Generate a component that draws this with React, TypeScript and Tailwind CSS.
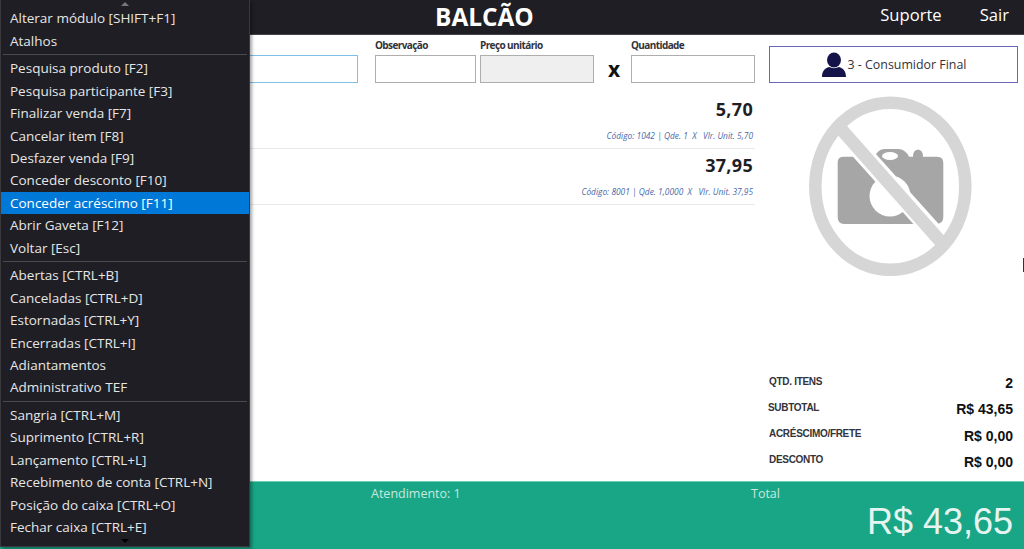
const groups = [
  ["Alterar módulo [SHIFT+F1]", "Atalhos"],
  ["Pesquisa produto [F2]", "Pesquisa participante [F3]", "Finalizar venda [F7]", "Cancelar item [F8]", "Desfazer venda [F9]", "Conceder desconto [F10]", "Conceder acréscimo [F11]", "Abrir Gaveta [F12]", "Voltar [Esc]"],
  ["Abertas [CTRL+B]", "Canceladas [CTRL+D]", "Estornadas [CTRL+Y]", "Encerradas [CTRL+I]", "Adiantamentos", "Administrativo TEF"],
  ["Sangria [CTRL+M]", "Suprimento [CTRL+R]", "Lançamento [CTRL+L]", "Recebimento de conta [CTRL+N]", "Posição do caixa [CTRL+O]", "Fechar caixa [CTRL+E]"],
];

function Menu() {
  return (
    <div className="absolute left-0 top-0 w-[250px] h-[547px] bg-[#1e1e24] border border-[#3a3a3e] border-t-0 shadow-[2px_2px_3px_rgba(0,0,0,0.35)] pt-[7.3px] text-[13.5px] text-[#e6e6e6] font-['Open_Sans',sans-serif]">
      <div className="absolute left-[120px] top-[2px] w-0 h-0 border-x-[4px] border-x-transparent border-b-[4px] border-b-[#77777a]" />
      {groups.map((g, i) => (
        <div key={i}>
          {i > 0 && <div className="mx-[2px] my-[2px] h-px bg-[#4a4a4e]" />}
          {g.map((t) => (
            <div
              key={t}
              className={`h-[22.45px] pl-[9px] flex items-center whitespace-nowrap ${t.startsWith("Conceder acr") ? "bg-[#0078d7] text-white" : ""}`}
            >
              {t}
            </div>
          ))}
        </div>
      ))}
      <div className="absolute left-[120px] top-[539px] w-0 h-0 border-x-[4px] border-x-transparent border-t-[4px] border-t-black" />
    </div>
  );
}

function Field({ label, className, bg }: { label?: string; className: string; bg?: string }) {
  return (
    <div className={`flex flex-col ${className}`}>
      <div className="h-[20px] text-[10px] tracking-[-0.6px] font-bold text-[#33333a] leading-[20px] whitespace-nowrap">{label}</div>
      <div className={`h-[28px] border border-[#aeaeae] ${bg ?? "bg-white"}`} />
    </div>
  );
}

function Item({ value, info }: { value: string; info: string }) {
  return (
    <div className="h-[56px] border-b border-[#e8e8ea] flex flex-col items-end pr-[2px]">
      <div className="text-[18px] font-bold text-[#1e1e24] leading-[25px] mt-[4px] tracking-[0.3px]">{value}</div>
      <div className="mt-[8px] text-[8.4px] italic text-[#4a6aa8] leading-[12px] whitespace-pre">{info}</div>
    </div>
  );
}

function Total({ label, value, labelClass, valueClass }: { label: string; value: string; labelClass?: string; valueClass?: string }) {
  return (
    <div className="h-[26px] flex justify-between items-start">
      <span className={`mt-[2px] text-[10px] tracking-[-0.3px] font-bold text-[#33333a] leading-[14px] ${labelClass ?? ""}`}>{label}</span>
      <span className={`text-[14px] font-bold text-[#111] leading-[18px] ${valueClass ?? "mt-[2px]"}`}>{value}</span>
    </div>
  );
}

export default function App() {
  return (
    <div className="relative w-[1024px] h-[549px] overflow-hidden bg-white font-['Open_Sans',sans-serif] flex flex-col">
      <header className="h-[35px] shrink-0 bg-[#1e1e24] border-b border-[#44444a] flex items-center text-white">
        <div className="ml-[435px] -mt-[1px] text-[24.4px] font-bold leading-[34px] whitespace-nowrap">BALCÃO</div>
        <div className="ml-auto mr-[15px] -mt-[4px] flex gap-[38px] text-[16.6px]">
          <span>Suporte</span>
          <span>Sair</span>
        </div>
      </header>
      <main className="flex-1 flex min-h-0">
        <div className="w-[755px] shrink-0">
          <div className="flex items-end">
            <div className="ml-[240px] w-[118px] h-[28px] border border-[#7fbfe8]" />
            <Field label="Observação" className="ml-[17px] w-[101px]" />
            <Field label="Preço unitário" className="ml-[4px] w-[114px]" bg="bg-[#efefef]" />
            <div className="w-[37px] h-[28px] pl-[3px] flex items-center justify-center text-[21px] font-bold text-[#111] leading-none">x</div>
            <Field label="Quantidade" className="w-[124px]" />
          </div>
          <div className="ml-[240px] mt-[10px]">
            <Item value="5,70" info="Código: 1042 | Qde. 1  X   Vlr. Unit. 5,70" />
            <Item value="37,95" info="Código: 8001 | Qde. 1,0000  X   Vlr. Unit. 37,95" />
          </div>
        </div>
        <div className="ml-[14px] w-[249px] flex flex-col">
          <div className="mt-[11px] h-[37px] border border-[#6a66b8] flex items-center justify-center gap-[1px] text-[12.4px] text-[#33333a]">
            <svg width="26" height="26" viewBox="0 0 26 26" fill="#14144a">
              <ellipse cx="13" cy="8" rx="7" ry="7.5" />
              <path d="M1 25c0-6 3-9 7-10 3 1.500 7 1.500 10 0 4 1 7 4 7 10z" />
            </svg>
            <span className="pt-[1px]">3 - Consumidor Final</span>
          </div>
          <svg className="ml-[40px] mt-[13px]" width="164" height="181" viewBox="0 0 164 181">
            <path d="M28.700 66 Q28.700 60.700 35 60.700 L66 60.700 Q68 54 75 53 L90 53 Q97 54 100 60.700 L104 60.700 Q104 54 109 53.500 Q114 54 114 60.700 L128 60.700 Q134.300 60.700 134.300 67 L134.300 121 Q134.300 128 127 128 L35 128 Q28.700 128 28.700 121 Z" fill="#a6a6a6" />
            <ellipse cx="81" cy="60" rx="8" ry="4" fill="#fff" />
            <circle cx="81" cy="100" r="20.500" fill="#fff" />
            <line x1="30" y1="31" x2="135" y2="148" stroke="#fff" strokeWidth="19" />
            <ellipse cx="81.300" cy="90.300" rx="75" ry="83.500" fill="none" stroke="#d6d6d6" strokeWidth="12.500" />
            <line x1="32" y1="33" x2="132" y2="146" stroke="#d6d6d6" strokeWidth="13" />
          </svg>
          <div className="mt-auto pb-[4px] pr-[5px] font-['Liberation_Sans',sans-serif]">
            <Total label="QTD. ITENS" value="2" valueClass="mt-[1px]" />
            <Total label="SUBTOTAL" value="R$ 43,65" labelClass="-ml-[1px]" valueClass="mt-[1px]" />
            <Total label="ACRÉSCIMO/FRETE" value="R$ 0,00" />
            <Total label="DESCONTO" value="R$ 0,00" />
          </div>
        </div>
      </main>
      <footer className="h-[68px] shrink-0 bg-[#19a686] border-t border-[#6fcdb5] flex text-[#c8e8de]">
        <div className="ml-[371px] mt-[3px] w-[380px] text-[12.5px]">Atendimento: 1</div>
        <div className="flex-1 pr-[11px] flex flex-col">
          <div className="mt-[3px] text-[12.5px]">Total</div>
          <div className="-mt-[3px] text-right text-[36px] leading-[42px] text-[#e6f4f0] font-['Liberation_Sans',sans-serif]">R$ 43,65</div>
        </div>
      </footer>
      <div className="absolute right-0 top-[258px] w-px h-[14px] bg-[#333]" />
      <Menu />
    </div>
  );
}
